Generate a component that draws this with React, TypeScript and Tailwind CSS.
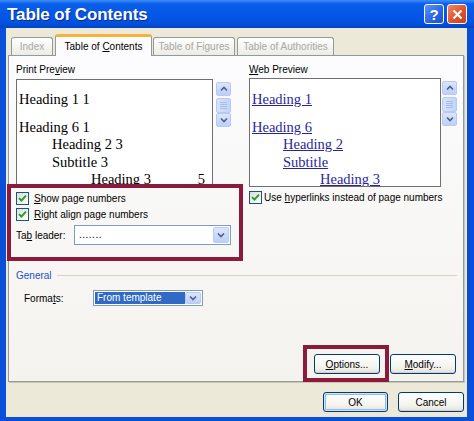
import React from "react";

const U = ({ children }: { children: React.ReactNode }) => <span className="underline underline-offset-[1px]">{children}</span>;

function Check({ checked = true }: { checked?: boolean }) {
  return (
    <span className="w-[13px] h-[13px] shrink-0 border border-[#1c5180] bg-[linear-gradient(135deg,#dcdcd7,#ffffff)] flex items-center justify-center">
      {checked && (
        <svg width="9" height="9" viewBox="0 0 9 9">
          <path d="M1 4.2 L3.4 6.6 L8 1.6" fill="none" stroke="#21a121" strokeWidth="1.9" />
        </svg>
      )}
    </span>
  );
}

function ScrollBtn({ dir }: { dir: "up" | "down" }) {
  return (
    <div className="w-[15px] h-[14px] rounded-[2px] border border-[#b7caf4] bg-[linear-gradient(to_bottom,#dbe6fd,#bccff8)] flex items-center justify-center">
      <svg width="8" height="6" viewBox="0 0 8 6">
        <path d={dir === "up" ? "M1 4.5 L4 1.5 L7 4.5" : "M1 1.5 L4 4.5 L7 1.5"} fill="none" stroke="#4d6185" strokeWidth="1.6" />
      </svg>
    </div>
  );
}

function Thumb() {
  return (
    <div className="w-[15px] h-[15px] rounded-[2px] border border-[#b7caf4] bg-[linear-gradient(to_right,#d6e2fc,#c3d4f9)] flex flex-col items-center justify-center gap-[1px]">
      <div className="w-[7px] h-px bg-[#a9bde8]" />
      <div className="w-[7px] h-px bg-[#a9bde8]" />
      <div className="w-[7px] h-px bg-[#a9bde8]" />
      <div className="w-[7px] h-px bg-[#a9bde8]" />
    </div>
  );
}

function ScrollBar() {
  return (
    <div className="w-[15px] flex flex-col pt-[3px] pb-[1px]">
      <ScrollBtn dir="up" />
      <div className="mt-[2px]">
        <Thumb />
      </div>
      <div className="flex-1" />
      <ScrollBtn dir="down" />
    </div>
  );
}

function DropBtn() {
  return (
    <div className="w-[16px] h-full rounded-[2px] border border-[#b7caf4] bg-[linear-gradient(to_bottom,#dbe6fd,#bccff8)] flex items-center justify-center">
      <svg width="8" height="6" viewBox="0 0 8 6">
        <path d="M1 1.5 L4 4.5 L7 1.5" fill="none" stroke="#4d6185" strokeWidth="1.6" />
      </svg>
    </div>
  );
}

function XPButton({ children, w, def = false }: { children: React.ReactNode; w: string; def?: boolean }) {
  return (
    <div
      className={`${w} h-[20px] rounded-[3px] border border-[#003c74] bg-[linear-gradient(to_bottom,#ffffff,#f3f3ee_70%,#e3e0d4)] flex items-center justify-center text-[10px] ${
        def ? "shadow-[inset_0_0_0_1px_#cee7ff,inset_0_0_0_2px_#98b8ea]" : "shadow-[inset_0_-1px_0_#d6d0c5]"
      }`}
    >
      {children}
    </div>
  );
}

const serif = "font-['Liberation_Serif','Times_New_Roman',serif] text-[14.5px] leading-[17.5px] whitespace-nowrap";

export default function App() {
  return (
    <div className="relative w-[474px] h-[421px] flex flex-col bg-[#0a4fd8] overflow-hidden font-['Liberation_Sans',Arial,sans-serif] text-[10px] text-black">
      {/* Title bar */}
      <div className="h-[28px] shrink-0 flex items-center justify-between pl-[7px] pr-[7px] bg-[linear-gradient(to_bottom,#3d8ef7_0%,#0a5fea_14%,#0457e6_50%,#0251dd_85%,#0043c4_100%)]">
        <span className="text-white font-bold text-[17px] leading-none tracking-[-0.1px] [text-shadow:1px_1px_0_#0a2a8a]">Table of Contents</span>
        <div className="flex gap-[3px] items-center">
          <div className="w-[20px] h-[20px] rounded-[3px] border border-white bg-[linear-gradient(135deg,#5c95f7,#2864e8_60%,#1d52d2)] flex items-center justify-center text-white font-bold text-[15px] leading-none">?</div>
          <div className="w-[20px] h-[20px] rounded-[3px] border border-white bg-[linear-gradient(135deg,#f08a6a,#e0522d_55%,#c9401e)] flex items-center justify-center">
            <svg width="11" height="11" viewBox="0 0 11 11">
              <path d="M1.5 1.5 L9.5 9.5 M9.5 1.5 L1.5 9.5" stroke="#fff" strokeWidth="2.2" />
            </svg>
          </div>
        </div>
      </div>

      {/* Body */}
      <div className="flex-1 ml-[6px] mr-[7px] mb-[4px] bg-[#ece9d8] flex flex-col">
        {/* Tabs */}
        <div className="h-[27px] shrink-0 flex items-end pl-[5px]">
          <div className="w-[42px] h-[18px] border border-b-0 border-[#919b9c] rounded-t-[3px] bg-[linear-gradient(to_bottom,#ffffff,#ecebe5)] flex items-center justify-center text-[#a9a9a0]">Index</div>
          <div className="relative z-10 ml-[2px] -mb-px w-[97px] h-[22px] border border-b-0 border-[#919b9c] border-t-[3px] border-t-[#f6b23d] rounded-t-[3px] bg-[#fcfcfe] flex items-center justify-center">
            <span>Table of <U>C</U>ontents</span>
          </div>
          <div className="ml-[1px] w-[82px] h-[18px] border border-b-0 border-[#919b9c] rounded-t-[3px] bg-[linear-gradient(to_bottom,#ffffff,#ecebe5)] flex items-center justify-center text-[#a9a9a0]">Table of Figures</div>
          <div className="ml-[2px] w-[97px] h-[18px] border border-b-0 border-[#919b9c] rounded-t-[3px] bg-[linear-gradient(to_bottom,#ffffff,#ecebe5)] flex items-center justify-center text-[#a9a9a0]">Table of Authorities</div>
        </div>

        {/* Panel */}
        <div className="ml-[2px] mr-[3px] h-[327px] shrink-0 border border-[#919b9c] bg-[linear-gradient(to_bottom,#fcfcfe,#f4f3ee)] shadow-[1px_1px_0_#c9c6b6] flex flex-col">
          <div className="flex pl-[7px]">
            {/* Left column */}
            <div className="w-[216px] flex flex-col">
              <div className="mt-[8px] h-[12px] leading-[12px]">Print Pre<U>v</U>iew</div>
              <div className="mt-[3px] h-[107px] flex">
                <div className="w-[197px] h-full border border-[#6f6f6f] bg-white overflow-hidden pl-[2px] pr-[7px] pt-[11px]">
                  <div className={serif}>Heading 1 1</div>
                  <div className={`${serif} mt-[10px]`}>Heading 6 1</div>
                  <div className={`${serif} pl-[33px]`}>Heading 2 3</div>
                  <div className={`${serif} pl-[33px]`}>Subtitle 3</div>
                  <div className={`${serif} pl-[72px] flex justify-between`}>
                    <span>Heading 3</span>
                    <span>5</span>
                  </div>
                </div>
                <div className="ml-[3px]">
                  <ScrollBar />
                </div>
              </div>
              <div className="mt-[4px] h-[16px] flex items-center gap-[5px]">
                <Check />
                <span><U>S</U>how page numbers</span>
              </div>
              <div className="h-[16px] flex items-center gap-[5px]">
                <Check />
                <span><U>R</U>ight align page numbers</span>
              </div>
              <div className="mt-[3px] h-[20px] flex items-center">
                <span className="w-[58px]">Ta<U>b</U> leader:</span>
                <div className="w-[157px] h-[20px] border border-[#7f9db9] bg-white flex items-center pl-[4px] pr-[1px] py-[1px]">
                  <span className="flex-1 leading-none tracking-[0.5px]">.......</span>
                  <DropBtn />
                </div>
              </div>
            </div>

            {/* Right column */}
            <div className="ml-[17px] w-[209px] flex flex-col">
              <div className="mt-[8px] h-[12px] leading-[12px]"><U>W</U>eb Preview</div>
              <div className="mt-[2px] h-[109px] flex">
                <div className="w-[192px] h-full border border-[#6f6f6f] bg-white overflow-hidden pl-[2px] pt-[12px] text-[#28279a]">
                  <div className={`${serif} underline`}>Heading 1</div>
                  <div className={`${serif} underline mt-[10px]`}>Heading 6</div>
                  <div className={`${serif} pl-[31px]`}><span className="underline">Heading 2</span></div>
                  <div className={`${serif} pl-[31px]`}><span className="underline">Subtitle</span></div>
                  <div className={`${serif} pl-[68px]`}><span className="underline">Heading 3</span></div>
                </div>
                <div className="ml-[1px]">
                  <ScrollBar />
                </div>
              </div>
              <div className="mt-[2px] h-[16px] flex items-center gap-[2px]">
                <Check />
                <span>Use <U>h</U>yperlinks instead of page numbers</span>
              </div>
            </div>
          </div>

          {/* General */}
          <div className="mt-[23px] h-[14px] flex items-center pl-[7px] pr-[6px]">
            <span className="text-[#2451c4]">General</span>
            <div className="flex-1 ml-[5px] h-px bg-[#d5d2c2]" />
          </div>
          <div className="mt-[8px] h-[16px] flex items-center pl-[15px]">
            <span className="w-[69px]">Forma<U>t</U>s:</span>
            <div className="w-[110px] h-[16px] border border-[#7f9db9] bg-white flex items-center p-px">
              <div className="w-[91px] h-full bg-[#316ac5] text-white flex items-center pl-[2px] leading-none">From template</div>
              <div className="flex-1" />
              <DropBtn />
            </div>
          </div>

          <div className="flex-1" />
          <div className="mb-[7px] flex justify-end gap-[10px] pr-[7px]">
            <XPButton w="w-[66px]"><span><U>O</U>ptions...</span></XPButton>
            <XPButton w="w-[66px]"><span><U>M</U>odify...</span></XPButton>
          </div>
        </div>

        {/* OK / Cancel */}
        <div className="mt-[10px] flex justify-end gap-[10px] pr-[3px]">
          <XPButton w="w-[65px]" def>OK</XPButton>
          <XPButton w="w-[66px]">Cancel</XPButton>
        </div>
      </div>

      {/* Annotation overlays */}
      <div className="absolute left-[7px] top-[184px] w-[236px] h-[77px] border-[4px] border-[#8c1a3d] pointer-events-none" />
      <div className="absolute left-[303px] top-[345px] w-[86px] h-[37px] border-[4px] border-[#8c1a3d] pointer-events-none" />
    </div>
  );
}
